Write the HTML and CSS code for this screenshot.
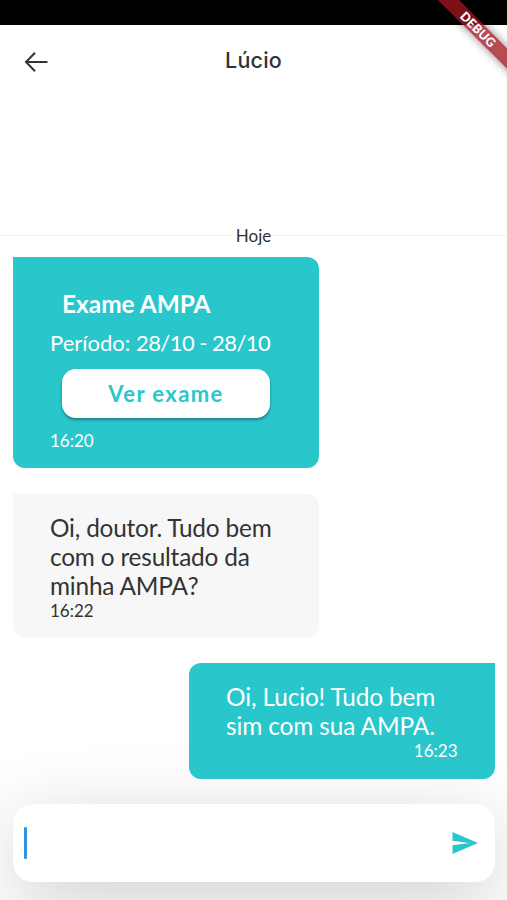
FILE: index.html
```html
<!DOCTYPE html>
<html lang="pt-BR">

<head>
  <meta charset="UTF-8">
  <meta name="viewport" content="width=device-width, initial-scale=1.0">
  <title>Chat - Lúcio</title>
  <link rel="stylesheet" href="styles.css">
</head>

<body>
  <div class="app">
    <div class="status-bar"></div>
    <div class="debug-banner">DEBUG</div>

    <header class="top-bar">
      <button type="button" class="back-btn" aria-label="Voltar">
        <svg width="24" height="22" viewBox="0 0 24 22" fill="none" stroke="#333" stroke-width="2">
          <path d="M23.5 11H2.5M11 1.8L2 11L11 20.2" />
        </svg>
      </button>
      <h1 class="title">Lúcio</h1>
    </header>

    <main class="messages">
      <div class="day-divider"><span>Hoje</span></div>

      <div class="message sent-exam">
        <h2 class="exam-title">Exame AMPA</h2>
        <p class="exam-period">Período: <span class="dates">28/10 - 28/10</span></p>
        <button type="button" class="exam-btn">Ver exame</button>
        <span class="time">16:20</span>
      </div>

      <div class="message received">
        <p class="text">Oi, doutor. Tudo bem<br>com o resultado da<br>minha AMPA?</p>
        <span class="time">16:22</span>
      </div>

      <div class="message sent">
        <p class="text">Oi, Lucio! Tudo bem<br>sim com sua AMPA.</p>
        <span class="time">16:23</span>
      </div>
    </main>

    <div class="input-bar">
      <span class="cursor"></span>
      <button type="button" class="send-btn" aria-label="Enviar">
        <svg width="27" height="22" viewBox="0 0 27 22" fill="#29c6cb">
          <path d="M0.5 0L26 11L0.5 22V13.2L17 11L0.5 8.8Z" />
        </svg>
      </button>
    </div>
  </div>
</body>

</html>
```

FILE: styles.css
```css
* {
  box-sizing: border-box;
}

body {
  font-family: Lato, sans-serif;
  background-color: #fff;
  color: #333;
  margin: 0;
}

h1,
h2,
p {
  margin: 0;
  font-weight: 400;
}

button {
  border: none;
  padding: 0;
  background: transparent;
  font-family: inherit;
  display: flex;
}

.app {
  position: relative;
  display: flex;
  flex-direction: column;
  height: 900px;
  overflow: hidden;
}

.status-bar {
  height: 25px;
  background-color: #000;
}

/* ribbon across the top right corner */
.debug-banner {
  position: absolute;
  top: 22px;
  left: 408px;
  width: 140px;
  height: 15px;
  line-height: 15px;
  text-align: center;
  font-family: Lato, sans-serif;
  font-size: 12.5px;
  font-weight: 900;
  letter-spacing: 0.2px;
  color: #fff;
  background-color: rgba(160, 22, 28, 0.77);
  box-shadow: 0 0 10px rgba(0, 0, 0, 0.45);
  transform: rotate(45deg);
}

.top-bar {
  display: grid;
  grid-template-columns: 80px 1fr 80px;
  align-items: center;
  height: 72px;
}

.back-btn {
  margin: 1px 0 0 24px;
}

.title {
  margin-top: -2px;
  text-align: center;
  font-family: Inter, sans-serif;
  font-size: 21.5px;
  font-weight: 500;
  letter-spacing: 0.2px;
}

.messages {
  display: flex;
  flex-direction: column;
  padding: 128px 12.5px 0 13px;
}

.day-divider {
  display: flex;
  align-items: center;
  margin: 0 -12.5px 12px -13px;
  height: 20px;
  font-size: 17px;
}

.day-divider span {
  padding: 0 1px;
}

.day-divider::before,
.day-divider::after {
  content: "";
  flex: 1;
  height: 1px;
  background-color: #f2f2f2;
}

.message {
  z-index: 1;
  display: flex;
  flex-direction: column;
  width: 305.5px;
  padding: 19px 37px 0;
  border-radius: 12px;
}

.sent-exam,
.sent {
  background-color: #29c6cb;
  color: #fff;
}

.sent-exam {
  height: 211px;
  padding-top: 31.5px;
  border-top-left-radius: 0;
}

.received {
  height: 144.5px;
  margin-top: 25.5px;
  background-color: #f7f7f7;
  border-top-left-radius: 0;
}

.sent {
  align-self: flex-end;
  height: 116px;
  margin-top: 25px;
  border-top-right-radius: 0;
}

.exam-title {
  padding-left: 12px;
  font-size: 24.4px;
  line-height: 30px;
  font-weight: 700;
}

.exam-period {
  margin-top: 10px;
  font-size: 22px;
  line-height: 27px;
  white-space: nowrap;
}

.dates {
  letter-spacing: -0.55px;
}

.exam-btn {
  align-items: center;
  justify-content: center;
  width: 208px;
  height: 49px;
  margin: 13px 0 13px 12px;
  border-radius: 14px;
  background-color: #fff;
  color: #29c6cb;
  font-size: 22px;
  font-weight: 700;
  letter-spacing: 1.4px;
  box-shadow: 0 2px 3px rgba(0, 0, 0, 0.35);
}

.text {
  font-size: 24.4px;
  line-height: 29.3px;
  letter-spacing: -0.2px;
  white-space: nowrap;
}

.time {
  font-size: 17px;
  line-height: 20px;
}

.received .time {
  margin-top: 1px;
}

.sent .text {
  letter-spacing: -0.12px;
}

.sent .time {
  align-self: flex-end;
}

.input-bar {
  display: flex;
  align-items: center;
  justify-content: space-between;
  height: 78px;
  margin: 24.5px 12.5px 0 13px;
  padding: 0 15.5px 0 11px;
  border-radius: 20px;
  background-color: #fff;
  box-shadow: 0 20px 80px rgba(0, 0, 0, 0.2);
}

.cursor {
  width: 3px;
  height: 32px;
  border-radius: 1px;
  background-color: #3595dc;
}
```
